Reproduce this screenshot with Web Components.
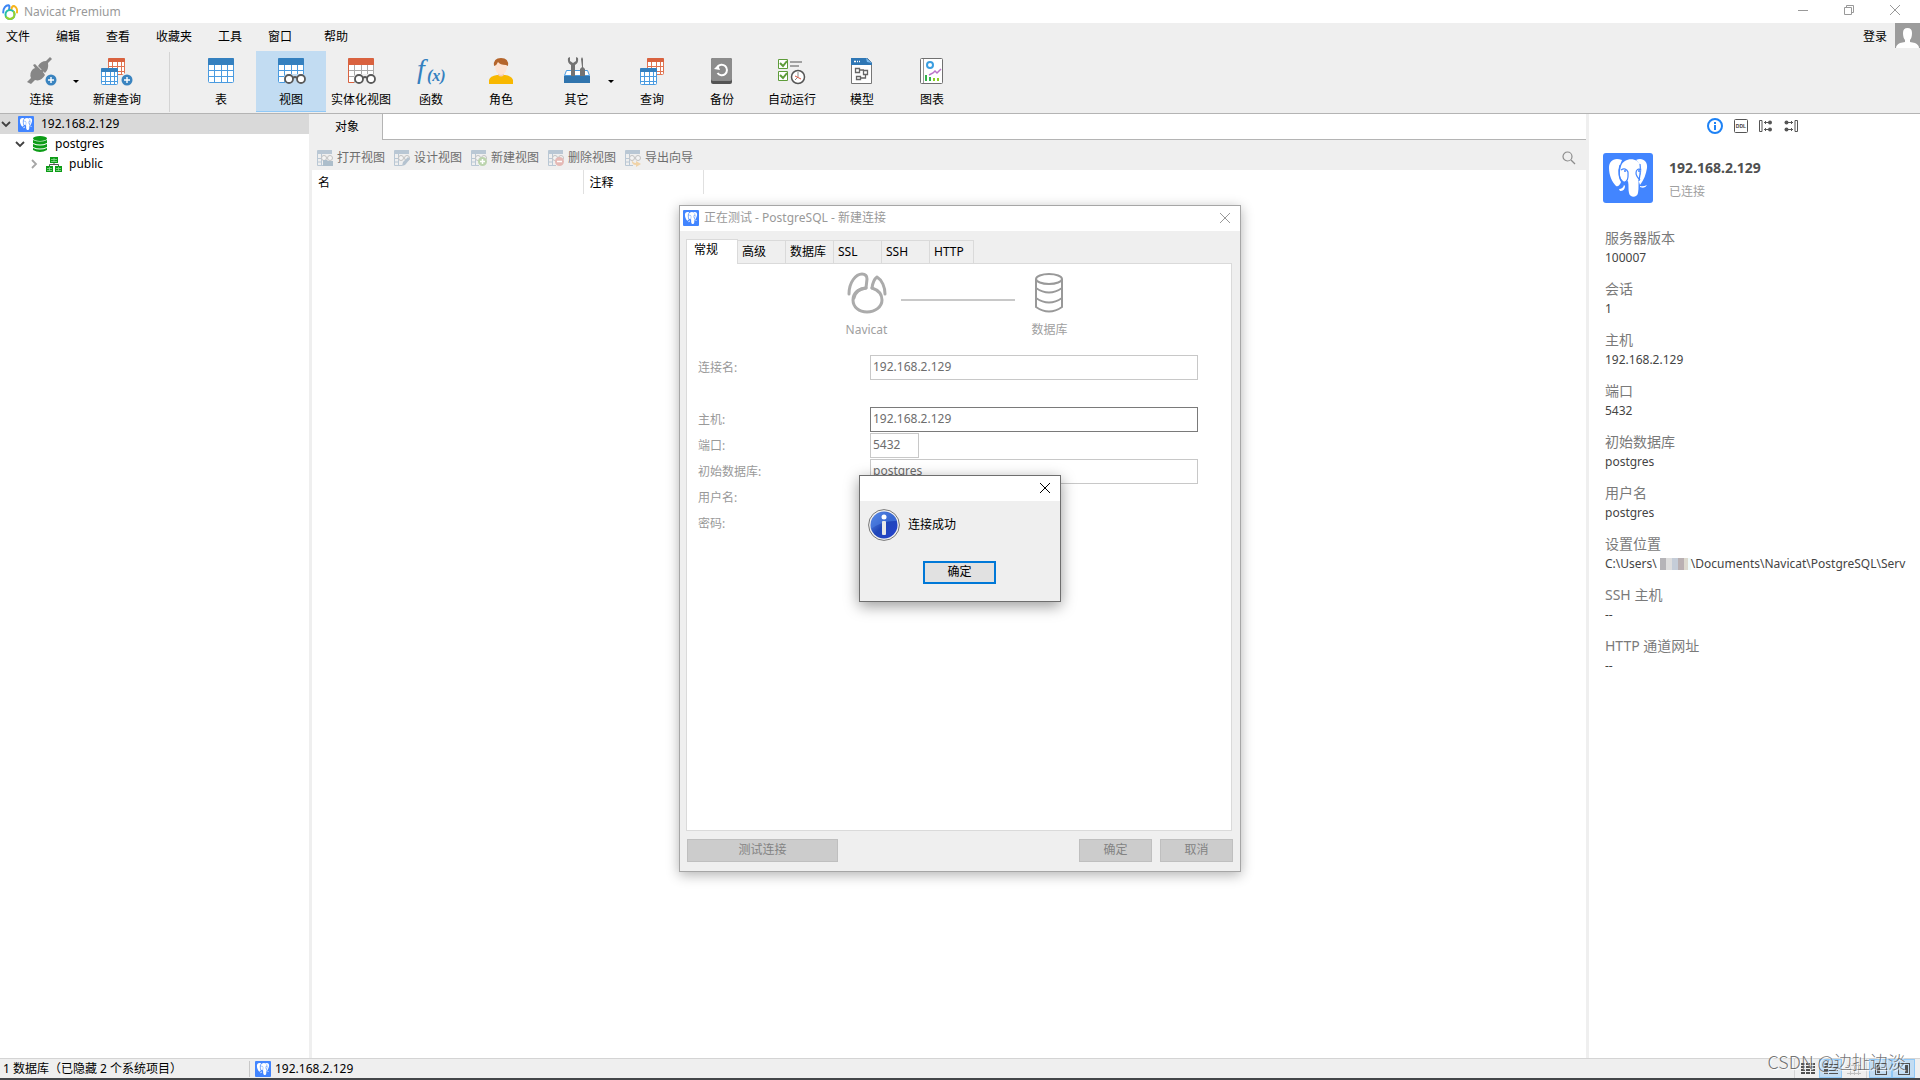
<!DOCTYPE html>
<html lang="zh-CN">
<head>
<meta charset="UTF-8">
<meta name="viewport" content="width=device-width, initial-scale=1.0">
<title>Navicat Premium</title>
<style>
    body {
        margin: 0;
        overflow: hidden;
        font: 12px/16px "Noto Sans", "Noto Sans CJK SC", sans-serif;
        color: #000;
    }
</style>
</head>
<body>
<navicat-app></navicat-app>

<script>
/* ---------- icons ---------- */

const grid = (x, y, w, h, head, line) => {
    const top = Math.round(h / 4);
    const cw = w / 4;
    const rh = (h - top) / 3;
    let lines = '';
    for (let i = 1; i < 4; i++) lines += `M${Math.round(x + cw * i)}.5 ${y + top}V${y + h}`;
    for (let i = 1; i < 3; i++) lines += `M${x} ${Math.round(y + top + rh * i)}.5H${x + w}`;
    return `<rect x="${x + .5}" y="${y + .5}" width="${w - 1}" height="${h - 1}" rx="1" fill="#fff" stroke="${line}"/>
        <path d="${lines}" stroke="${line}"/>
        <path d="M${x} ${y + top}v${1 - top}q0-1 1-1h${w - 2}q1 0 1 1v${top - 1}z" fill="${head}"/>`;
};

const bigGrid = (head, line) => `
    <rect x="3.5" y="1.5" width="25" height="24" rx="1" fill="#fff" stroke="${line}"/>
    <path d="M9.5 8v18M16.5 8v18M22.5 8v18M3 13.5h26M3 19.5h26" stroke="${line}"/>
    <path d="M3 8V2q0-1 1-1h24q1 0 1 1v6z" fill="${head}"/>`;

const plus = (x, y) => `
    <circle cx="${x}" cy="${y}" r="5.5" fill="#3a84c0"/>
    <path d="M${x - 3} ${y}h6M${x} ${y - 3}v6" stroke="#fff" stroke-width="1.4"/>`;

const glasses = back => `
    <path d="M9 20q0-3 4-3h14q4 0 4 4v5H10z" fill="${back}"/>
    <g stroke="#595959" stroke-width="1.8" fill="#fff">
        <circle cx="14" cy="22" r="4"/><circle cx="26" cy="22" r="4"/>
        <path d="M18 21q2-2 4 0" fill="none"/>
    </g>`;

const elephant = `
    <rect width="50" height="50" rx="3" fill="#4285ff"/>
    <path d="M19 7C11 4 6 8 6 15c0 7 3 14 7 18 2 1 4-1 5-4-3-4-3-12-1-17z" fill="#fff"/>
    <path d="M33 7c6-3 12 1 11 8-1 6-3 12-7 17-2-4-1-8 1-12 1-6-1-10-5-13z" fill="#fff"/>
    <path d="M18 13c3-9 17-9 20 0 1 4-1 8-2 12-1 5 0 10-1 15-1 5-8 5-9 0-1-4 0-7-1-12-3 1-5 1-7-2-2-4-1-9 0-13z" fill="#fff"/>
    <path d="M18 17c3-2 6-1 7 2 0 4 1 9-3 10M38 17c-3-2-5 0-5 3 0 3 2 5 4 7M17 12c-2 6-1 14 3 17M37 11c1 6 0 11-1 17" fill="none" stroke="#4285ff" stroke-width="1.2"/>
    <circle cx="22" cy="18" r="1" fill="#4285ff"/><circle cx="36" cy="18" r="1" fill="#4285ff"/>
    <path d="M16 36q4 0 5-4l1 1q0 5-5 5zM37 33q3 1 7-1-2 4-7 2z" fill="#fff"/>`;

const smallView = extra => `
    <path d="M0 1q0-1 1-1h14v4H0z" fill="#b9c7d4"/>
    <path d="M.5 4v11.5H8M.5 8.500H5M.5 12H5M4.500 4v11" stroke="#b9c7d4" fill="none"/>
    <g fill="#f4f4f4" stroke="#c2c2c2"><circle cx="7" cy="8" r="2.500"/><circle cx="13" cy="8" r="2.500"/></g>${extra}`;

const ICONS = {
    logo: [16, 16, `
        <g fill="none" stroke-width="2" stroke-linecap="round">
            <path d="M1.200 8.500C1 4 4 1 6.500 1.200 8 2 7.500 4 7 5.500" stroke="#3c86f4"/>
            <path d="M9.500 5.500C9.500 3.500 10.500 1.800 12 2c2.500 1 3.500 4 3 6.500" stroke="#f7b51c"/>
            <circle cx="8" cy="10.500" r="4.500" stroke="#27c0a6"/>
            <path d="M4.300 13.300q3.700 3.500 7.500-.3 1.500-2.500.2-5" stroke="#9bd12b"/>
        </g>`],
    connect: [32, 28, `
        <g fill="#868686">
            <path d="M12 9q3-5 8-5l4-4 2 2-4 4q1 6-3 10z"/>
            <path d="M1 25l4-4q-2-5 2-9l2-1-2-3 2-1 3 3 3 3 4-3 1 1-3 4 2 3q-4 7-10 5l-4 4z"/>
        </g>
        <circle cx="25" cy="23" r="7" fill="#efefef"/>${plus(25, 23)}`],
    newquery: [32, 28, `${grid(7, 1, 17, 17, '#d9623f', '#e07452')}${grid(0, 11, 17, 17, '#3480bf', '#4a9be0')}
        <circle cx="26" cy="23" r="7" fill="#efefef"/>${plus(26, 23)}`],
    table: [32, 28, bigGrid('#3480bf', '#4a9be0')],
    view: [32, 28, bigGrid('#3480bf', '#4a9be0') + glasses('#c2dcf2')],
    matview: [32, 28, bigGrid('#d9623f', '#aaa') + '<path d="M3.500 8v17.500H9" stroke="#d9623f" fill="none"/>' + glasses('#efefef')],
    fx: [32, 28, `<g fill="#3480bf" font-family="Liberation Serif, serif" font-style="italic">
        <text x="2" y="21" font-size="28">f</text><text x="12" y="24" font-size="16" font-weight="bold">(x)</text></g>`],
    role: [32, 28, `
        <path d="M4 27v-4q1-4 8-5h8q7 1 8 5v4z" fill="#f8b800"/>
        <path d="M13 14h6v4q-3 3-6 0z" fill="#f4cdb6"/>
        <path d="M10 8q0-5 6-5t6 5q0 9-6 10-6-1-6-10z" fill="#fde3d3"/>
        <path d="M9 9q-1-8 7-8t7 8l-2-1q-6 0-8-3-1 3-4 4z" fill="#b5652b"/>`],
    other: [32, 28, `
        <path d="M5.500 13.500h21l2 5h-25z" fill="#fff" stroke="#4a9be0"/>
        <g fill="#737373">
            <path d="M7 1q-1 5 3 7v11h4V8q4-2 3-7l-2-1v4l-3 2-3-2V0z"/>
            <path d="M20 2l1-2 1 2v8l2 2v7h-5v-7l2-2z"/>
        </g>
        <path d="M3 19h26v7H3z" fill="#3074ad"/>`],
    query: [32, 28, grid(11, 1, 17, 17, '#d9623f', '#e07452') + grid(4, 11, 17, 17, '#3480bf', '#4a9be0')],
    backup: [32, 28, `
        <rect x="5" y="1" width="21" height="26" rx="2" fill="#545454"/>
        <rect x="5" y="1" width="21" height="23" rx="2" fill="#8c8c8c"/>
        <path d="M11.500 10a5.200 5.200 0 1 1 0 6" fill="none" stroke="#fff" stroke-width="2"/>
        <path d="M8 12l6 1-2-5z" fill="#fff"/>`],
    auto: [32, 28, `
        <path d="M2.500 2.500h9v9h-9zM2.500 14.500h9v9h-9z" fill="#fff" stroke="#5e9c3a"/>
        <path d="M4 6l3 3 4-5M4 18l3 3 4-5" fill="none" stroke="#5e9c3a" stroke-width="2"/>
        <path d="M14 5h12M14 9h9" stroke="#888" stroke-width="1.500"/>
        <circle cx="22" cy="20" r="6.500" fill="#fff" stroke="#555" stroke-width="1.500"/>
        <path d="M22 15v5l-3 3" fill="none" stroke="#888"/><path d="M19 19l6 3" stroke="#e0563f"/>`],
    model: [32, 28, `
        <path d="M5.500 1.500h16l4 4v21h-20z" fill="#fff" stroke="#777"/>
        <path d="M5 1h16l5 5v2H5z" fill="#2f77b5"/><path d="M20 1l1 4 5 1z" fill="#7dbcf0"/>
        <path d="M8 4.500h2M11 4.500h1M13 4.500h1" stroke="#fff" stroke-width="1.500"/>
        <path d="M9.500 11.500h4v4h-4zM17.500 13.500h4v4h-4zM10.500 19.500h4v3h-4zM14 13h4M19.500 18v3H15" fill="none" stroke="#666" stroke-width="1.300"/>`],
    chart: [32, 28, `
        <rect x="4.500" y="1.500" width="22" height="25" rx="1" fill="#fff" stroke="#707070"/>
        <path d="M7.500 2v24" stroke="#999"/>
        <circle cx="14" cy="8" r="3" fill="none" stroke="#3a9ee0" stroke-width="2"/>
        <path d="M13 18l4-2 2-2 2 2 4-4" fill="none" stroke="#bb74ca" stroke-width="1.500"/>
        <path d="M10 18v6M14 20v4" stroke="#32b34a" stroke-width="2"/><path d="M18 21v3M22 21v3" stroke="#8bcf23" stroke-width="2"/>`],
    elephant: [50, 50, elephant],
    database: [16, 16, `
        <g fill="#0c9c16"><ellipse cx="8" cy="2.500" rx="7" ry="2.500"/>
        <path d="M1 4q7 3 14 0v3q-7 3-14 0zM1 8q7 3 14 0v3q-7 3-14 0zM1 12q7 3 14 0v2q-7 4-14 0z"/></g>`],
    schema: [16, 16, `
        <path d="M4 1h8v6H4zM0 10h7v6H0zM9 10h7v6H9z" fill="#0c9c16"/>
        <path d="M5 3.500h6M5 5.500h6M8 2v4M1 12.500h5M1 14.500h5M3.500 11v4M10 12.500h5M10 14.500h5M12.500 11v4" stroke="#8ed993" stroke-width=".8"/>
        <path d="M8 7v2M3.500 10V8.500h9V10" stroke="#555" fill="none"/>`],
    open: [16, 16, smallView('<path d="M6 10h4l1 1h5v5H6z" fill="#adbecb"/>')],
    design: [16, 16, smallView('<path d="M8 16l1-4 5-5 2 2-5 6z" fill="#b5c3d0"/>')],
    add: [16, 16, smallView('<circle cx="11.500" cy="11.500" r="4.500" fill="#bcd4ae"/><path d="M9 11.500h5M11.500 9v5" stroke="#fff" stroke-width="1.500"/>')],
    remove: [16, 16, smallView('<circle cx="11.500" cy="11.500" r="4.500" fill="#e5b9b5"/><path d="M9 11.500h5" stroke="#fff" stroke-width="1.500"/>')],
    export: [16, 16, smallView('<path d="M7 9q0 4 4 4v-2l5 3-5 3v-2q-5 0-4-6z" fill="#f0d3a8"/>')],
    search: [14, 14, '<g fill="none" stroke="#8c8c8c" stroke-width="1.200"><circle cx="5.500" cy="5.500" r="4.500"/><path d="M9 9l4 4"/></g>'],
    min: [10, 10, '<path d="M0 5.500h10" stroke="#999"/>'],
    restore: [10, 10, '<path d="M.5 2.500h7v7h-7zM2.500 2V.5h7v7H8" fill="none" stroke="#999"/>'],
    close: [10, 10, '<path d="M0 0l10 10M10 0L0 10" stroke="currentColor"/>'],
    user: [25, 25, `<rect width="25" height="25" fill="#9c9c9c"/>
        <path d="M8 10q0-5 4.500-5T17 10q0 5-2 7v2l5 1q4 2 4 5H1q0-3 4-5l5-1v-2q-2-2-2-7z" fill="#fff"/>`],
    info: [16, 16, '<circle cx="8" cy="8" r="7" fill="#fff" stroke="#1e82f5" stroke-width="2"/><path d="M8 4v2M8 7v5" stroke="#1e82f5" stroke-width="2"/>'],
    ddl: [14, 14, `<rect x=".5" y=".5" width="13" height="13" rx="1" fill="none" stroke="#555"/>
        <text x="7" y="9" text-anchor="middle" font-size="5" font-weight="bold" font-family="Liberation Sans, sans-serif" fill="#444">DDL</text>`],
    using: [14, 14, '<path d="M3 1.500H.5v11H3V1.500M5 3.500h5M5 10.500h5M6.500 2v3M6.500 9v3" fill="none" stroke="#555"/><circle cx="11" cy="3.500" r="2" fill="#555"/><circle cx="11" cy="10.500" r="2" fill="#555"/>'],
    usedby: [14, 14, '<path d="M11 1.500h2.500v11H11zM4 3.500h5M4 10.500h5M7.500 2v3M7.500 9v3" fill="none" stroke="#555"/><circle cx="2.500" cy="3.500" r="2" fill="#555"/><circle cx="2.500" cy="10.500" r="2" fill="#555"/>'],
    down: [10, 10, '<path d="M1 3l4 4 4-4" fill="none" stroke="#404040" stroke-width="1.800"/>'],
    right: [10, 10, '<path d="M3 1l4 4-4 4" fill="none" stroke="#a6a6a6" stroke-width="1.800"/>'],
    navicat: [40, 40, `<g fill="none" stroke="#ababab" stroke-width="3" stroke-linecap="round" stroke-linejoin="round">
        <path d="M2 21C2 9 9 1 15 1q5 0 5 5l-1 9Q9 16 7 25"/>
        <path d="M25 15q1-8 5-11c5 3 8 10 8 17"/>
        <path d="M19 15C10 16 6 21 6 27c0 7 6 12 14 12s15-5 15-12c0-6-4-10-10-12"/>
        </g>`],
    drum: [40, 40, `<g fill="none" stroke="#999" stroke-width="2">
        <ellipse cx="20" cy="6" rx="13" ry="5"/><path d="M7 6v28q13 9 26 0V6M7 15q13 9 26 0M7 25q13 9 26 0"/></g>`],
    bubble: [32, 32, `
        <defs><linearGradient id="g" x1="0" y1="0" x2="1" y2="1"><stop offset="0" stop-color="#6b9bf0"/><stop offset=".5" stop-color="#1f46b8"/><stop offset="1" stop-color="#2742d0"/></linearGradient></defs>
        <circle cx="16" cy="16" r="15.400" fill="#f2f2f2" stroke="#777"/>
        <circle cx="16" cy="16" r="13.500" fill="url(#g)"/>
        <path d="M3 16Q4 4 16 3q12 1 13 9-14-1-26 8z" fill="#4c80e2" opacity=".6"/>
        <circle cx="16" cy="8" r="2.500" fill="#fff"/><rect x="14" y="12" width="4" height="14" rx="1" fill="#e8e8e8"/>`],
    tiles: [14, 12, '<path d="M0 1h14M0 4h14M0 7h14M0 10h14" stroke="#505050" stroke-width="2" stroke-dasharray="4 1"/>'],
    list: [14, 12, '<path d="M0 1h4M0 4h4M0 7h4M0 10h4" stroke="#505050" stroke-width="2"/><path d="M5 1.500h9M5 4.500h9M5 7.500h9M5 10.500h9" stroke="#505050"/>'],
    er: [14, 12, '<path d="M0 2.500h14M0 6.500h14M0 10.500h14M3.500 0v12M7.500 0v12M11.500 0v12" stroke="#c0c0c0"/>'],
    leftpane: [12, 12, '<rect x=".5" y=".5" width="11" height="11" fill="none" stroke="#505050"/><path d="M2 2h3v8H2z" fill="#505050"/>'],
    rightpane: [12, 12, '<rect x=".5" y=".5" width="11" height="11" fill="none" stroke="#505050"/><path d="M7 2h3v8H7z" fill="#505050"/>']
};

class NvIcon extends HTMLElement {
    constructor() {
        super();
        this.attachShadow({ mode: 'open' });
    }

    connectedCallback() {
        const [w, h, body] = ICONS[this.getAttribute('name')];
        const size = this.getAttribute('size');
        this.shadowRoot.innerHTML = /* html */`
        <style>
            :host { display: block; flex: none; }
            svg { display: block; overflow: visible; }
        </style>
        <svg width="${size || w}" height="${size || h}" viewBox="0 0 ${w} ${h}" aria-hidden="true">${body}</svg>
        `;
    }
}
customElements.define('nv-icon', NvIcon);

/* Base for the elements that only have static markup */
class NvElement extends HTMLElement {
    constructor() {
        super();
        this.attachShadow({ mode: 'open' });
    }

    connectedCallback() {
        this.shadowRoot.innerHTML = /* html */`
        <style>
            button {
                font: inherit;
                color: inherit;
                border: 0;
                padding: 0;
                background: none;
            }
        </style>
        ${this.render()}
        `;
    }
}

/* ---------- window top ---------- */

class TitleBar extends NvElement {
    render() {
        return /* html */`
        <style>
            :host { display: flex; align-items: center; height: 23px; padding: 0 2px; background: #fff; color: #999; }
            h1 { flex: 1; margin: 0 0 0 6px; font: inherit; }
            button { display: grid; place-items: center; align-self: flex-start; width: 46px; height: 20px; }
        </style>
        <nv-icon name="logo"></nv-icon>
        <h1>Navicat Premium</h1>
        <button aria-label="Minimize"><nv-icon name="min"></nv-icon></button>
        <button aria-label="Restore"><nv-icon name="restore"></nv-icon></button>
        <button aria-label="Close"><nv-icon name="close"></nv-icon></button>
        `;
    }
}
customElements.define('title-bar', TitleBar);

class MenuBar extends NvElement {
    render() {
        return /* html */`
        <style>
            :host { display: flex; align-items: center; height: 28px; background: #efefef; }
            nav { display: flex; flex: 1; gap: 26px; padding-left: 6px; }
            .help { margin-left: 6px; }
            .login { margin-right: 8px; }
            .user { align-self: flex-start; height: 25px; }
        </style>
        <nav>
            <button>文件</button>
            <button>编辑</button>
            <button>查看</button>
            <button>收藏夹</button>
            <button>工具</button>
            <button>窗口</button>
            <button class="help">帮助</button>
        </nav>
        <button class="login">登录</button>
        <nv-icon class="user" name="user"></nv-icon>
        `;
    }
}
customElements.define('menu-bar', MenuBar);

class ToolButton extends NvElement {
    render() {
        return /* html */`
        <style>
            :host { display: block; width: 70px; }
            :host([menu]) { width: 81px; }
            :host([active]) button { background: #c2dcf2; border-bottom: 1px solid #90c8f6; }
            button {
                position: relative;
                display: flex;
                flex-direction: column;
                align-items: center;
                gap: 7px;
                box-sizing: border-box;
                width: 100%;
                height: 61px;
                padding-top: 6px;
                white-space: nowrap;
            }
            .arrow {
                position: absolute;
                right: 3px;
                top: 29px;
                border: 3px solid transparent;
                border-top-color: #000;
                border-bottom: 0;
            }
        </style>
        <button>
            <nv-icon name="${this.getAttribute('icon')}"></nv-icon>
            <slot></slot>
            ${this.hasAttribute('menu') ? '<span class="arrow"></span>' : ''}
        </button>
        `;
    }
}
customElements.define('tool-button', ToolButton);

class MainToolbar extends NvElement {
    render() {
        return /* html */`
        <style>
            :host { display: flex; height: 62px; padding-left: 1px; background: #efefef; border-bottom: 1px solid #b4b4b4; }
            .line { width: 1px; height: 60px; margin: 1px 16px 0 17px; background: #d4d4d4; }
        </style>
        <tool-button icon="connect" menu>连接</tool-button>
        <tool-button icon="newquery">新建查询</tool-button>
        <span class="line"></span>
        <tool-button icon="table">表</tool-button>
        <tool-button icon="view" active>视图</tool-button>
        <tool-button icon="matview">实体化视图</tool-button>
        <tool-button icon="fx">函数</tool-button>
        <tool-button icon="role">角色</tool-button>
        <tool-button icon="other" menu>其它</tool-button>
        <tool-button icon="query">查询</tool-button>
        <tool-button icon="backup">备份</tool-button>
        <tool-button icon="auto">自动运行</tool-button>
        <tool-button icon="model">模型</tool-button>
        <tool-button icon="chart">图表</tool-button>
        `;
    }
}
customElements.define('main-toolbar', MainToolbar);

/* ---------- left tree ---------- */

class TreeItem extends NvElement {
    render() {
        const level = Number(this.getAttribute('level'));
        return /* html */`
        <style>
            :host { display: flex; align-items: center; height: 20px; gap: 7px; padding-left: ${1 + level * 14}px; }
            :host([selected]) { background: #d9d9d9; }
        </style>
        <nv-icon name="${this.hasAttribute('closed') ? 'right' : 'down'}"></nv-icon>
        <nv-icon name="${this.getAttribute('icon')}" size="16"></nv-icon>
        <slot></slot>
        `;
    }
}
customElements.define('tree-item', TreeItem);

class ConnectionTree extends NvElement {
    render() {
        return /* html */`
        <style>
            :host { display: block; width: 309px; border-right: 3px solid #efefef; background: #fff; }
        </style>
        <div role="tree">
            <tree-item role="treeitem" level="0" icon="elephant" selected>192.168.2.129</tree-item>
            <tree-item role="treeitem" level="1" icon="database">postgres</tree-item>
            <tree-item role="treeitem" level="2" icon="schema" closed>public</tree-item>
        </div>
        `;
    }
}
customElements.define('connection-tree', ConnectionTree);

/* ---------- object list ---------- */

class ObjectAction extends NvElement {
    render() {
        return /* html */`
        <style>
            :host { display: block; width: 77px; color: #6d6d6d; }
            button { display: flex; align-items: center; gap: 4px; white-space: nowrap; }
        </style>
        <button disabled><nv-icon name="${this.getAttribute('icon')}"></nv-icon><slot></slot></button>
        `;
    }
}
customElements.define('object-action', ObjectAction);

class ObjectPane extends NvElement {
    render() {
        return /* html */`
        <style>
            :host { display: block; flex: 1; min-width: 0; background: #fff; }
            .tabs { display: flex; height: 26px; background: #efefef; }
            .tabs button { width: 71px; border-right: 1px solid #b4b4b4; }
            .rest { flex: 1; background: #fff; border-bottom: 1px solid #b4b4b4; }
            .actions { display: flex; align-items: center; height: 30px; padding: 5px 10px 0 5px; box-sizing: border-box; background: #efefef; }
            .search { margin-left: auto; }
            table { border-collapse: collapse; table-layout: fixed; width: 392px; }
            th { height: 24px; padding: 1px 6px 0; box-sizing: border-box; border-right: 1px solid #e0e0e0; font-weight: normal; text-align: left; }
            th:first-child { width: 271px; }
        </style>
        <div class="tabs" role="tablist">
            <button role="tab">对象</button>
            <div class="rest"></div>
        </div>
        <div class="actions">
            <object-action icon="open">打开视图</object-action>
            <object-action icon="design">设计视图</object-action>
            <object-action icon="add">新建视图</object-action>
            <object-action icon="remove">删除视图</object-action>
            <object-action icon="export">导出向导</object-action>
            <button class="search" aria-label="Search"><nv-icon name="search"></nv-icon></button>
        </div>
        <table>
            <thead><tr><th>名</th><th>注释</th></tr></thead>
        </table>
        `;
    }
}
customElements.define('object-pane', ObjectPane);

/* ---------- info pane ---------- */

class InfoField extends NvElement {
    render() {
        return /* html */`
        <style>
            :host { display: block; height: 51px; white-space: nowrap; overflow: hidden; color: #444; }
            dl, dd { margin: 0; }
            dt { font-size: 14px; line-height: 20px; color: #7a7a7a; }
            dd { line-height: 20px; }
        </style>
        <dl>
            <dt>${this.getAttribute('label')}</dt>
            <dd><slot></slot></dd>
        </dl>
        `;
    }
}
customElements.define('info-field', InfoField);

class InfoPane extends NvElement {
    render() {
        return /* html */`
        <style>
            :host { display: block; box-sizing: border-box; width: 334px; padding: 0 8px 0 16px; border-left: 3px solid #efefef; background: #fff; }
            .views { display: flex; align-items: center; justify-content: center; gap: 11px; height: 24px; padding-right: 12px; }
            header { display: flex; gap: 16px; margin: 15px 0 25px -2px; }
            h2 { margin: 5px 0 6px; font-size: 14px; line-height: 20px; color: #505050; }
            p { margin: 0; color: #a0a0a0; }
            /* masked user name */
            .mask {
                display: inline-block;
                width: 31px;
                height: 12px;
                vertical-align: -2px;
                background: linear-gradient(90deg, #b5b4b8 6px, #dedede 6px 12px, #c5cdd8 12px 18px, #b9b0b2 18px 24px, #dcd9cf 24px 28px, #eefafa 28px);
            }
        </style>
        <div class="views">
            <button aria-label="Info"><nv-icon name="info"></nv-icon></button>
            <button aria-label="DDL"><nv-icon name="ddl"></nv-icon></button>
            <button aria-label="Using"><nv-icon name="using"></nv-icon></button>
            <button aria-label="Used by"><nv-icon name="usedby"></nv-icon></button>
        </div>
        <header>
            <nv-icon name="elephant"></nv-icon>
            <div>
                <h2>192.168.2.129</h2>
                <p>已连接</p>
            </div>
        </header>
        <info-field label="服务器版本">100007</info-field>
        <info-field label="会话">1</info-field>
        <info-field label="主机">192.168.2.129</info-field>
        <info-field label="端口">5432</info-field>
        <info-field label="初始数据库">postgres</info-field>
        <info-field label="用户名">postgres</info-field>
        <info-field label="设置位置">C:\\Users\\ <span class="mask"></span>\\Documents\\Navicat\\PostgreSQL\\Serv</info-field>
        <info-field label="SSH 主机">--</info-field>
        <info-field label="HTTP 通道网址">--</info-field>
        `;
    }
}
customElements.define('info-pane', InfoPane);

/* ---------- status bar ---------- */

class StatusBar extends NvElement {
    render() {
        return /* html */`
        <style>
            :host { display: flex; align-items: center; height: 19px; background: #efefef; border-top: 1px solid #d4d4d4; border-bottom: 2px solid #444649; }
            .count { box-sizing: border-box; width: 250px; padding-left: 3px; border-right: 1px solid #c8c8c8; white-space: nowrap; }
            .conn { display: flex; flex: 1; gap: 4px; padding-left: 5px; }
            .group { display: flex; height: 19px; padding: 0 1px; border-left: 1px solid #d4d4d4; }
            .panes { padding: 0 5px 0 2px; }
            button { display: grid; place-items: center; width: 23px; height: 19px; }
            .on { background: #c2dcf2; box-shadow: inset 0 0 0 1px #90c8f6; }
        </style>
        <span class="count">1 数据库（已隐藏 2 个系统项目）</span>
        <span class="conn"><nv-icon name="elephant" size="16"></nv-icon>192.168.2.129</span>
        <div class="group">
            <button aria-label="Icons"><nv-icon name="tiles"></nv-icon></button>
            <button class="on" aria-label="List"><nv-icon name="list"></nv-icon></button>
            <button disabled aria-label="ER"><nv-icon name="er"></nv-icon></button>
        </div>
        <div class="group panes">
            <button class="on" aria-label="Left pane"><nv-icon name="leftpane"></nv-icon></button>
            <button class="on" aria-label="Right pane"><nv-icon name="rightpane"></nv-icon></button>
        </div>
        `;
    }
}
customElements.define('status-bar', StatusBar);

/* ---------- connection dialog ---------- */

class FormRow extends NvElement {
    render() {
        const value = this.getAttribute('value');
        return /* html */`
        <style>
            :host { display: grid; grid-template-columns: 172px 1fr; align-items: center; height: 26px; color: #999; }
            input {
                box-sizing: border-box;
                width: 100%;
                height: 25px;
                padding: 0 2px 2px;
                border: 1px solid #c8c8c8;
                background: #fff;
                font: inherit;
                color: #6d6d6d;
            }
            :host([focused]) input { border-color: #7a7a7a; }
            :host([short]) input { width: 49px; }
        </style>
        <label for="field"><slot></slot></label>
        ${value ? `<input id="field" value="${value}" disabled>` : ''}
        `;
    }
}
customElements.define('form-row', FormRow);

class DialogButton extends NvElement {
    render() {
        return /* html */`
        <style>
            :host { display: block; width: 73px; }
            :host([wide]) { width: 151px; }
            button { box-sizing: border-box; width: 100%; height: 23px; border: 1px solid #bfbfbf; background: #ccc; color: #838383; }
            :host([primary]) button { border: 2px solid #0078d7; background: #e1e1e1; color: #000; }
        </style>
        <button ${this.hasAttribute('primary') ? '' : 'disabled'}><slot></slot></button>
        `;
    }
}
customElements.define('dialog-button', DialogButton);

class ConnectionDialog extends NvElement {
    render() {
        return /* html */`
        <style>
            :host {
                display: block;
                box-sizing: border-box;
                width: 562px;
                border: 1px solid #a6a6a6;
                background: #efefef;
                box-shadow: 0 3px 12px rgba(0, 0, 0, .3);
            }
            header { display: flex; align-items: center; gap: 5px; height: 25px; padding: 0 10px 0 3px; background: #fff; color: #999; }
            h2 { flex: 1; margin: 0; font: inherit; }
            .tabs { display: flex; align-items: flex-end; height: 24px; margin: 8px 0 0 6px; }
            .tabs button { box-sizing: border-box; width: 48px; height: 23px; padding-left: 4px; border: 1px solid #dadada; border-left: 0; border-bottom: 0; text-align: left; white-space: nowrap; }
            .tabs .active { position: relative; width: 52px; height: 25px; margin-bottom: -1px; padding: 0 0 3px 7px; border-left: 1px solid #dadada; background: #fff; }
            .tabs button:last-child { width: 44px; }
            .panel { min-height: 566px; margin: 0 8px 0 6px; border: 1px solid #dadada; background: #fff; }
            .link { display: grid; grid-template-columns: auto 114px auto; justify-content: center; justify-items: center; column-gap: 14px; padding: 9px 3px 17px 0; color: #a0a0a0; }
            .link figure { display: grid; justify-items: center; gap: 9px; margin: 0; }
            .link hr { width: 100%; height: 2px; margin: 26px 0 0; border: 0; background: #c8c8c8; }
            form { padding: 0 33px 0 11px; }
            .gap { height: 26px; }
            footer { display: flex; gap: 8px; padding: 8px 7px 9px; }
            footer dialog-button:first-child { margin-right: auto; }
        </style>
        <header>
            <nv-icon name="elephant" size="16"></nv-icon>
            <h2>正在测试 - PostgreSQL - 新建连接</h2>
            <button aria-label="Close"><nv-icon name="close"></nv-icon></button>
        </header>
        <div class="tabs" role="tablist">
            <button role="tab" class="active" aria-selected="true">常规</button>
            <button role="tab">高级</button>
            <button role="tab">数据库</button>
            <button role="tab">SSL</button>
            <button role="tab">SSH</button>
            <button role="tab">HTTP</button>
        </div>
        <div class="panel">
            <div class="link">
                <figure><nv-icon name="navicat"></nv-icon><figcaption>Navicat</figcaption></figure>
                <hr>
                <figure><nv-icon name="drum"></nv-icon><figcaption>数据库</figcaption></figure>
            </div>
            <form>
                <form-row value="192.168.2.129">连接名:</form-row>
                <div class="gap"></div>
                <form-row value="192.168.2.129" focused>主机:</form-row>
                <form-row value="5432" short>端口:</form-row>
                <form-row value="postgres">初始数据库:</form-row>
                <form-row>用户名:</form-row>
                <form-row>密码:</form-row>
            </form>
        </div>
        <footer>
            <dialog-button wide>测试连接</dialog-button>
            <dialog-button>确定</dialog-button>
            <dialog-button>取消</dialog-button>
        </footer>
        `;
    }
}
customElements.define('connection-dialog', ConnectionDialog);

class MessageBox extends NvElement {
    render() {
        return /* html */`
        <style>
            :host {
                display: block;
                box-sizing: border-box;
                width: 202px;
                border: 1px solid #6e6e6e;
                background: #efefef;
                box-shadow: 0 4px 14px rgba(0, 0, 0, .4);
            }
            header { display: flex; align-items: center; justify-content: flex-end; height: 25px; padding-right: 10px; background: #fff; }
            .body { display: flex; align-items: center; gap: 8px; margin: 8px 8px 20px; }
            p { margin: 0; }
            dialog-button { margin: 0 auto 17px 63px; }
        </style>
        <header><button aria-label="Close"><nv-icon name="close"></nv-icon></button></header>
        <div class="body">
            <nv-icon name="bubble"></nv-icon>
            <p><slot></slot></p>
        </div>
        <dialog-button primary>确定</dialog-button>
        `;
    }
}
customElements.define('message-box', MessageBox);

/* ---------- app ---------- */

class NavicatApp extends NvElement {
    render() {
        return /* html */`
        <style>
            :host { position: relative; display: flex; flex-direction: column; height: 100vh; }
            main { display: flex; flex: 1; min-height: 0; }
            .overlay { position: absolute; inset: 0 0 4px; display: grid; place-items: center; }
            .overlay > * { grid-area: 1 / 1; }
            .mark {
                position: absolute;
                right: 14px;
                bottom: 7px;
                font: 300 18px/24px "Noto Sans CJK SC", sans-serif;
                color: rgba(70, 70, 70, .75);
                text-shadow: 1px 1px 1px #fff;
            }
        </style>
        <title-bar></title-bar>
        <menu-bar></menu-bar>
        <main-toolbar></main-toolbar>
        <main>
            <connection-tree></connection-tree>
            <object-pane></object-pane>
            <info-pane></info-pane>
        </main>
        <status-bar></status-bar>
        <div class="overlay">
            <connection-dialog role="dialog"></connection-dialog>
            <message-box role="alertdialog">连接成功</message-box>
        </div>
        <span class="mark">CSDN @边扯边淡</span>
        `;
    }
}
customElements.define('navicat-app', NavicatApp);
</script>
</body>
</html>
